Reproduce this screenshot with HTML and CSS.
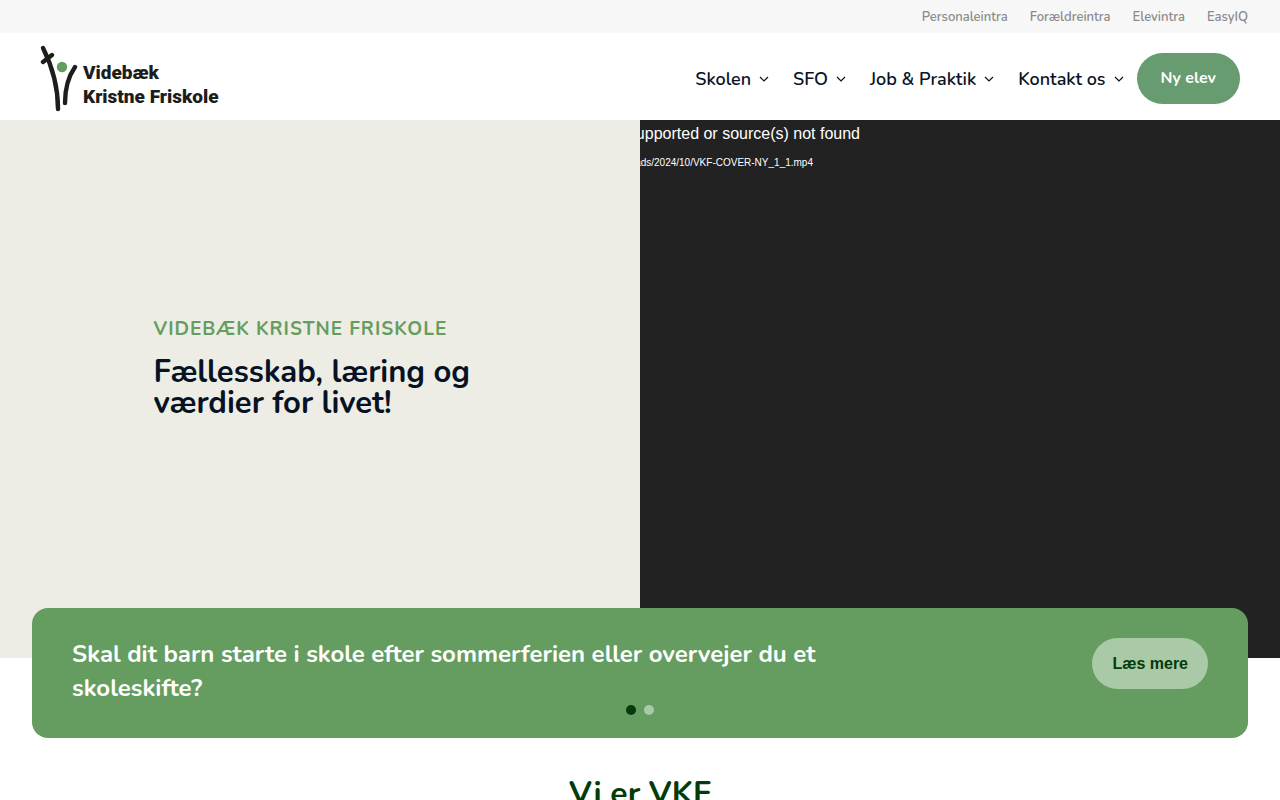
FILE: index.html
```html
<!DOCTYPE html>
<html lang="da">
<head>
<meta charset="utf-8">
<meta name="viewport" content="width=device-width, initial-scale=1">
<title>Videbæk Kristne Friskole</title>
<link rel="stylesheet" href="styles.css">
</head>
<body>
<nav class="topbar" aria-label="Intra">
  <a href="#">Personaleintra</a>
  <a href="#">Forældreintra</a>
  <a href="#">Elevintra</a>
  <a href="#">EasyIQ</a>
</nav>
<header class="header">
  <a class="logo" href="#">
    <svg class="logo-mark" width="38" height="68" viewBox="0 0 38 68" aria-hidden="true">
      <g fill="none" stroke="#1d1d1b" stroke-width="4.4" stroke-linecap="round">
        <path d="M3 3C11 19 18 41 18 64"/>
        <path d="M3 17L12 10"/>
        <path d="M35 22C28 32 25 43 25 58"/>
      </g>
      <circle cx="22" cy="22" r="5.2" fill="#659d60"/>
    </svg>
    <span class="logo-text"><span>Videbæk</span><span>Kristne Friskole</span></span>
  </a>
  <nav class="menu" aria-label="Hovedmenu">
    <a href="#">Skolen <svg class="chevron" viewBox="0 0 10 6"><path d="M1 1l4 4 4-4"/></svg></a>
    <a href="#">SFO <svg class="chevron" viewBox="0 0 10 6"><path d="M1 1l4 4 4-4"/></svg></a>
    <a href="#">Job &amp; Praktik <svg class="chevron" viewBox="0 0 10 6"><path d="M1 1l4 4 4-4"/></svg></a>
    <a href="#">Kontakt os <svg class="chevron" viewBox="0 0 10 6"><path d="M1 1l4 4 4-4"/></svg></a>
  </nav>
  <a class="pill pill-new" href="#">Ny elev</a>
</header>
<main>
  <section class="hero">
    <div class="hero-copy">
      <p class="eyebrow">VIDEBÆK KRISTNE FRISKOLE</p>
      <h1>Fællesskab, læring og værdier for livet!</h1>
    </div>
    <div class="video">
      <div class="video-error">
        <p>not supported or source(s) not found</p>
        <a href="#">uploads/2024/10/VKF-COVER-NY_1_1.mp4</a>
      </div>
    </div>
  </section>
  <section class="banner">
    <div class="slide">
      <h2>Skal dit barn starte i skole efter sommerferien eller overvejer du et skoleskifte?</h2>
      <a class="pill pill-more" href="#">Læs mere</a>
    </div>
    <div class="dots">
      <button class="dot dot-active" type="button" aria-label="Slide 1"></button>
      <button class="dot" type="button" aria-label="Slide 2"></button>
    </div>
  </section>
  <h2 class="section-title">Vi er VKF</h2>
</main>
</body>
</html>
```

FILE: styles.css
```css
* { box-sizing: border-box; }
body {
  margin: 0;
  background: #fff;
  color: #071324;
  font-family: Nunito, Lato, sans-serif;
}
h1, h2, p { margin: 0; }
a { color: inherit; text-decoration: none; }

.topbar {
  display: flex;
  justify-content: flex-end;
  gap: 22px;
  padding: 8px 32px 7px;
  background: #f7f7f7;
  color: #8b8b8b;
  font-size: 13px;
  font-weight: 600;
  line-height: 18px;
}

.header {
  display: flex;
  align-items: center;
  min-height: 87px;
  padding: 8px 40px 4px;
}
.logo {
  display: flex;
  align-items: center;
  gap: 5px;
  margin-right: auto;
  color: #1d1d1b;
}
.logo-text {
  display: flex;
  flex-direction: column;
  padding-top: 12px;
  font-family: Roboto, sans-serif;
  font-size: 19px;
  font-weight: 900;
  line-height: 24px;
}
.menu {
  display: flex;
  gap: 24px;
  padding-right: 13px;
  font-size: 18px;
  font-weight: 600;
}
.menu a { display: flex; align-items: center; gap: 8px; }
.chevron {
  width: 10px;
  height: 6px;
  fill: none;
  stroke: currentColor;
  stroke-width: 1.2;
}
.pill {
  padding: 13px 24px;
  border-radius: 26px;
  font-size: 16px;
  font-weight: 700;
  line-height: 25px;
  white-space: nowrap;
}
.pill-new { background: #669c70; color: #fff; }
.pill-more {
  margin-top: 1px;
  padding: 13px 20px;
  background: #a9c9a7;
  color: #043b08;
  font-family: "Liberation Sans", Arial, sans-serif;
}

.hero {
  display: grid;
  grid-template-columns: 1fr 1fr;
  min-height: 538px;
}
.hero-copy {
  display: flex;
  flex-direction: column;
  justify-content: center;
  gap: 16px;
  padding: 0 120px 42px 24%;
  background: #eeede5;
}
.eyebrow {
  color: #659d60;
  font-size: 19px;
  font-weight: 700;
  line-height: 24px;
  letter-spacing: 1px;
}
.hero h1 { font-size: 31px; font-weight: 700; line-height: 31px; }
.video {
  overflow: hidden;
  background: #222;
  color: #fff;
  font-family: "Liberation Sans", Arial, sans-serif;
}
.video-error {
  display: flex;
  flex-direction: column;
  align-items: flex-end;
  gap: 8px;
  width: 220px;
  padding-top: 4px;
  font-size: 16px;
  line-height: 20px;
  white-space: nowrap;
}
.video-error a { padding-right: 47px; font-size: 10px; line-height: 22px; }

.banner {
  position: relative;
  margin: -50px 32px 0;
  padding: 29px 40px 23px;
  border-radius: 16px;
  background: #659d60;
  color: #fff;
}
.slide {
  display: flex;
  align-items: flex-start;
  justify-content: space-between;
}
.slide h2 {
  max-width: 780px;
  font-size: 24px;
  font-weight: 700;
  line-height: 34px;
}
.dots { display: flex; justify-content: center; gap: 8px; }
.dot {
  width: 10px;
  height: 10px;
  padding: 0;
  border: 0;
  border-radius: 50%;
  background: #a9c9a7;
}
.dot-active { background: #043b08; }
.section-title {
  padding: 33px 0;
  color: #043b08;
  font-size: 32px;
  font-weight: 700;
  line-height: 46px;
  text-align: center;
}
```
